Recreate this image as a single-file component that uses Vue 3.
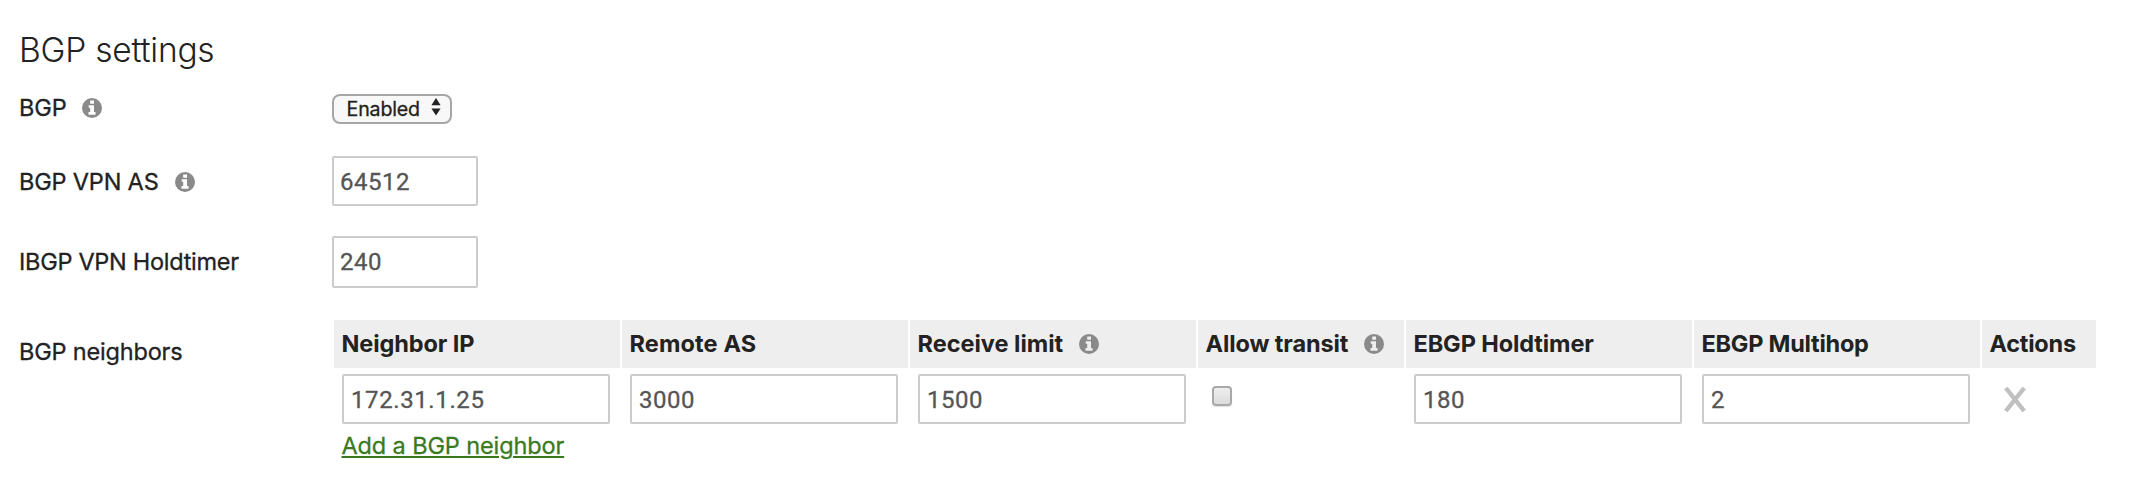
<script setup>
import { h, reactive } from 'vue'

const InfoIcon = () =>
  h('svg', { class: 'info', viewBox: '0 0 20 20', width: 20, height: 20 }, [
    h('circle', { cx: 10, cy: 10, r: 10 }),
    h('path', { d: 'M8.2 2.6h3.8v3.2H8.2zM6.7 7.3h5.3v6.8h1.5v2.6H6.5v-2.6h1.7V9.8H6.7z' }),
  ])

const form = reactive({ vpnAs: '64512', hold: '240', transit: false })

const columns = [
  { key: 'ip', label: 'Neighbor IP' },
  { key: 'as', label: 'Remote AS' },
  { key: 'limit', label: 'Receive limit', info: true },
  { key: 'transit', label: 'Allow transit', info: true },
  { key: 'ebgpHold', label: 'EBGP Holdtimer' },
  { key: 'ebgpHop', label: 'EBGP Multihop' },
  { key: 'actions', label: 'Actions' },
]

const neighbor = reactive({ ip: '172.31.1.25', as: '3000', limit: '1500', ebgpHold: '180', ebgpHop: '2' })
</script>

<template>
  <main class="page">
    <h2 class="title">BGP settings</h2>

    <div class="row row-bgp">
      <div class="label"><span class="name-bgp">BGP</span><InfoIcon /></div>
      <button class="select" type="button">
        <span>Enabled</span>
        <svg class="arrows" width="10" height="18" viewBox="0 0 10 18">
          <path d="M5 0l4.6 7.2H.4zM5 17.6L.4 10.6h9.2z" />
        </svg>
      </button>
    </div>

    <div class="row row-as">
      <div class="label"><span>BGP VPN AS</span><InfoIcon /></div>
      <input v-model="form.vpnAs" class="field" type="text" />
    </div>

    <div class="row row-hold">
      <div class="label"><span class="name-hold">IBGP VPN Holdtimer</span></div>
      <input v-model="form.hold" class="field tall" type="text" />
    </div>

    <div class="row row-neighbors">
      <div class="label"><span>BGP neighbors</span></div>
      <div class="neighbors">
        <div class="grid head">
          <div v-for="c in columns" :key="c.key" class="th" :class="'th-' + c.key">
            <span>{{ c.label }}</span><InfoIcon v-if="c.info" />
          </div>
        </div>
        <div class="grid body">
          <div v-for="c in columns" :key="c.key" class="td">
            <button v-if="c.key === 'transit'" class="check" type="button" aria-label="Allow transit"></button>
            <svg v-else-if="c.key === 'actions'" class="remove" width="24" height="25" viewBox="0 0 24 25">
              <path d="M2.8 1L21.2 24M21.2 1L2.8 24" />
            </svg>
            <input v-else v-model="neighbor[c.key]" class="field wide" :class="'val-' + c.key" type="text" />
          </div>
        </div>
        <a class="add">Add a BGP neighbor</a>
      </div>
    </div>
  </main>
</template>

<style>
body {
  background: #fff;
}
</style>

<style scoped>
.page {
  box-sizing: border-box;
  height: 482px;
  overflow: hidden;
  padding-left: 19px;
  font: 400 23.5px/24px Inter, 'Liberation Sans', sans-serif;
  letter-spacing: -0.18px;
  color: #222;
}
.title {
  margin: 0;
  height: 94px;
  box-sizing: border-box;
  padding-top: 30px;
  font-size: 33.5px;
  line-height: 40px;
  font-weight: 300;
  letter-spacing: -0.22px;
}
.row {
  display: grid;
  grid-template-columns: 313px 1fr;
  align-items: start;
}
.row-bgp {
  height: 62px;
}
.row-as {
  height: 80px;
}
.row-hold {
  height: 84px;
}
.label {
  display: flex;
  align-items: center;
  white-space: nowrap;
  -webkit-text-stroke: 0.3px currentColor;
}
.row-bgp .label {
  padding-top: 2px;
}
.row-as .label,
.row-hold .label {
  padding-top: 14px;
}
.row-neighbors .label {
  padding-top: 20px;
}
.name-bgp {
  letter-spacing: -0.1px;
}
.name-hold {
  letter-spacing: -0.28px;
}
.page :deep(.info) {
  flex: none;
  margin-left: 16px;
}
.row-bgp :deep(.info) {
  margin-left: 15.5px;
}
.page :deep(.info circle) {
  fill: #8a8a8a;
}
.page :deep(.info path) {
  fill: #fff;
}
.head :deep(.info) {
  margin-left: 15.5px;
}
.head :deep(.info path) {
  fill: #eee;
}
.select {
  box-sizing: border-box;
  width: 120px;
  height: 30px;
  display: flex;
  align-items: center;
  justify-content: space-between;
  margin: 0;
  padding: 0 9px 0 12.5px;
  border: 2px solid #a6a6a6;
  border-radius: 8px;
  background: #f8f8f8;
  font: 400 19.6px/26px Inter, 'Liberation Sans', sans-serif;
  letter-spacing: -0.15px;
  color: #222;
  -webkit-text-stroke: 0.3px currentColor;
}
.arrows {
  margin-top: -4px;
  fill: #222;
}
.field {
  box-sizing: border-box;
  display: block;
  width: 146px;
  height: 50px;
  margin: 0;
  padding: 1px 6px 0;
  border: 2px solid #ccc;
  border-radius: 2px;
  outline: none;
  background: #fff;
  color: #555;
  font: 400 24px Roboto, 'Liberation Sans', sans-serif;
  letter-spacing: 0.5px;
  -webkit-text-stroke: 0.3px currentColor;
}
.tall {
  height: 52px;
  padding-top: 0;
}
.wide {
  width: 268px;
  padding: 2px 7px 0;
}
.val-ip {
  letter-spacing: 0.6px;
}
.neighbors {
  padding-left: 2px;
}
.grid {
  display: grid;
  grid-template-columns: 286px 286px 286px 206px 286px 286px 114px;
  column-gap: 2px;
}
.th {
  box-sizing: border-box;
  display: flex;
  align-items: center;
  height: 48px;
  padding: 0 0 0 7.5px;
  background: #eee;
  font-weight: 700;
  letter-spacing: -0.1px;
  white-space: nowrap;
}
.th-as {
  letter-spacing: 0.14px;
}
.th-limit {
  letter-spacing: 0;
}
.th-transit {
  letter-spacing: -0.1px;
}
.th-ebgpHop,
.th-actions {
  letter-spacing: -0.24px;
}
.body {
  height: 62px;
}
.td {
  padding: 6px 0 0 8px;
}
.check {
  display: block;
  box-sizing: border-box;
  width: 20px;
  height: 20px;
  margin: 12px 0 0 6px;
  padding: 0;
  border: 2px solid #a9a9a9;
  border-radius: 4px;
  background: linear-gradient(#eee, #dcdcdc);
  box-shadow: 0 1px 1px rgba(0, 0, 0, 0.12);
}
.remove {
  display: block;
  margin: 13px 0 0 12.5px;
  fill: none;
  stroke: #c0c0c0;
  stroke-width: 4.4;
}
.add {
  display: inline-block;
  margin: 4px 0 0 7.5px;
  color: #3a7a1e;
  letter-spacing: -0.12px;
  text-decoration: underline;
  text-decoration-thickness: 2px;
  text-underline-offset: 2px;
  -webkit-text-stroke: 0.3px currentColor;
}
</style>
